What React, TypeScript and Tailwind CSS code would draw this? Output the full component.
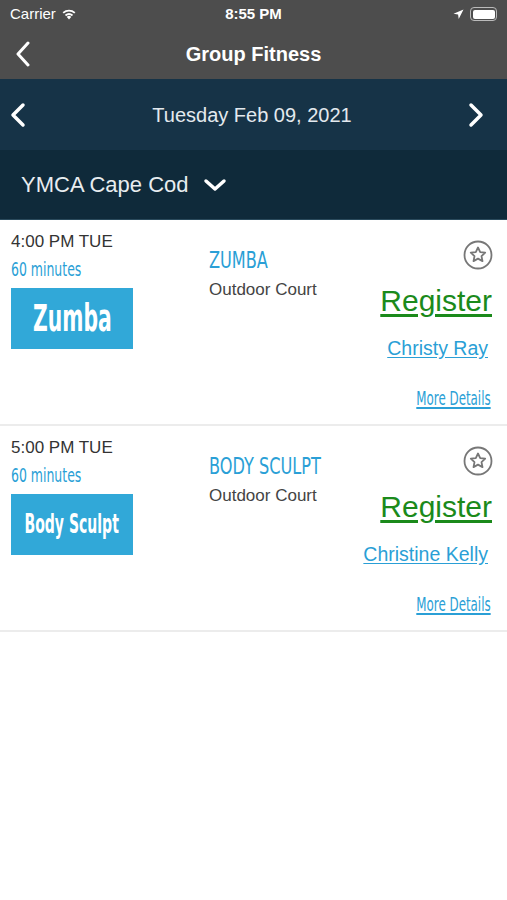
import React from 'react';

const condensed = { fontFamily: '"DejaVu Sans Condensed", "Liberation Sans Narrow", sans-serif' };
const sans = { fontFamily: '"Liberation Sans", Arial, sans-serif' };

type Session = {
  time: string;
  title: string;
  badge: string;
  instructor: string;
};

const sessions: Session[] = [
  { time: '4:00 PM TUE', title: 'ZUMBA', badge: 'Zumba', instructor: 'Christy Ray' },
  { time: '5:00 PM TUE', title: 'BODY SCULPT', badge: 'Body Sculpt', instructor: 'Christine Kelly' },
];

function StarButton() {
  return (
    <svg width="30" height="30" viewBox="0 0 30 30" fill="none" stroke="#777" strokeWidth="1.8" strokeLinejoin="round">
      <circle cx="15" cy="15" r="13.5" />
      <path d="M15 7.5l2.2 4.6 5 .6-3.7 3.4 1 5-4.5-2.5-4.5 2.5 1-5-3.7-3.4 5-.6z" />
    </svg>
  );
}

function SessionRow({ s }: { s: Session }) {
  const long = s.badge.length > 6;
  return (
    <div className="flex h-[206px] border-b-2 border-[#ececec] px-[11px] pt-[12px]">
      <div className="w-[198px] shrink-0">
        <div className="text-[17px] leading-[20px] text-[#333]">{s.time}</div>
        <div className="mt-[7px] text-[19px] leading-[20px] text-[#2a9fd6] whitespace-nowrap" style={condensed}>
          <span className="inline-block origin-left scale-x-[0.73]">60 minutes</span>
        </div>
        <div
          className="mt-[9px] w-[122px] h-[61px] bg-[#31a8d8] flex items-center justify-center text-white whitespace-nowrap"
          style={condensed}
        >
          <span
            className={
              long
                ? 'inline-block text-[26px] font-bold scale-x-[0.6]'
                : 'inline-block text-[37px] font-bold scale-x-[0.61]'
            }
          >
            {s.badge}
          </span>
        </div>
      </div>
      <div className="flex-1 pt-[15px] whitespace-nowrap">
        <div className="text-[23px] leading-[26px] text-[#2a9fd6]" style={condensed}>
          <span className="inline-block origin-left scale-x-[0.78]">{s.title}</span>
        </div>
        <div className="text-[17px] leading-[20px] mt-[7px] text-[#444]">Outdoor Court</div>
      </div>
      <div className="flex flex-col items-end pr-[4px] whitespace-nowrap">
        <div className="mt-[8px] mr-[-1px]">
          <StarButton />
        </div>
        <a href="#" className="mt-[14px] text-[30px] leading-[34px] text-[#1b8a1b] underline underline-offset-[3px]">
          Register
        </a>
        <a href="#" className="mt-[18px] text-[19.5px] leading-[24px] text-[#2a9fd6] underline underline-offset-[2px] mr-[4px]">
          {s.instructor}
        </a>
        <a href="#" className="mt-[28px] text-[20px] leading-[20px] text-[#2a9fd6] mr-[1px]" style={condensed}>
          <span className="inline-block origin-right scale-x-[0.66] underline underline-offset-[2px]">More Details</span>
        </a>
      </div>
    </div>
  );
}

export default function App() {
  return (
    <div className="w-[507px] h-[900px] bg-white overflow-hidden" style={sans}>
      {/* Status + nav */}
      <div className="bg-[#4d4d4d] text-white">
        <div className="h-[28px] flex items-center px-[10px] text-[15px]">
          <div className="flex-1 flex items-center gap-[5px]">
            <span>Carrier</span>
            <svg width="16" height="12" viewBox="0 0 16 12" fill="white">
              <path d="M8 11.5l2.2-2.6a3.2 3.2 0 0 0-4.4 0z" />
              <path d="M3.9 6.8l1.2 1.4a4.4 4.4 0 0 1 5.8 0l1.2-1.4a6.3 6.3 0 0 0-8.2 0z" />
              <path d="M1.6 4.2l1.2 1.4a7.8 7.8 0 0 1 10.4 0l1.2-1.4a9.7 9.7 0 0 0-12.8 0z" />
            </svg>
          </div>
          <span className="font-bold">8:55 PM</span>
          <div className="flex-1 flex items-center justify-end gap-[6px]">
            <svg width="11" height="11" viewBox="0 0 11 11" fill="white">
              <path d="M10.5 0.5L0.5 4.8l4.6.6.6 4.6z" />
            </svg>
            <div className="w-[27px] h-[14px] rounded-[4px] border border-[#bbb] p-[1.5px] flex items-center">
              <div className="flex-1 h-full bg-white rounded-[2px]" />
            </div>
          </div>
        </div>
        <div className="h-[51px] relative flex items-center justify-center">
          <svg className="absolute left-[15px] top-[13px]" width="16" height="26" viewBox="0 0 16 26" fill="none" stroke="white" strokeWidth="3" strokeLinecap="round" strokeLinejoin="round">
            <path d="M13 2L3 13l10 11" />
          </svg>
          <span className="text-[20px] font-bold">Group Fitness</span>
        </div>
      </div>

      {/* Date bar */}
      <div className="h-[71px] bg-[#163347] flex items-center justify-between pl-[9px] pr-[22px] text-[#e3e9ee]">
        <svg width="18" height="26" viewBox="0 0 18 26" fill="none" stroke="white" strokeWidth="3.5" strokeLinecap="round" strokeLinejoin="round">
          <path d="M14 3L4 13l10 10" />
        </svg>
        <span className="text-[20px] ml-[10px]">Tuesday Feb 09, 2021</span>
        <svg width="18" height="26" viewBox="0 0 18 26" fill="none" stroke="white" strokeWidth="3.5" strokeLinecap="round" strokeLinejoin="round">
          <path d="M4 3l10 10-10 10" />
        </svg>
      </div>

      {/* Location bar */}
      <div className="h-[70px] bg-[#0f2a3a] flex items-center pl-[21px] gap-[14px] text-[#e8edf0] border-b border-[#2a4a5c]">
        <span className="text-[22px]">YMCA Cape Cod</span>
        <svg width="24" height="16" viewBox="0 0 24 16" fill="none" stroke="white" strokeWidth="3.5" strokeLinecap="round" strokeLinejoin="round">
          <path d="M3 4l9 8 9-8" />
        </svg>
      </div>

      {sessions.map((s) => (
        <SessionRow key={s.title} s={s} />
      ))}
    </div>
  );
}
